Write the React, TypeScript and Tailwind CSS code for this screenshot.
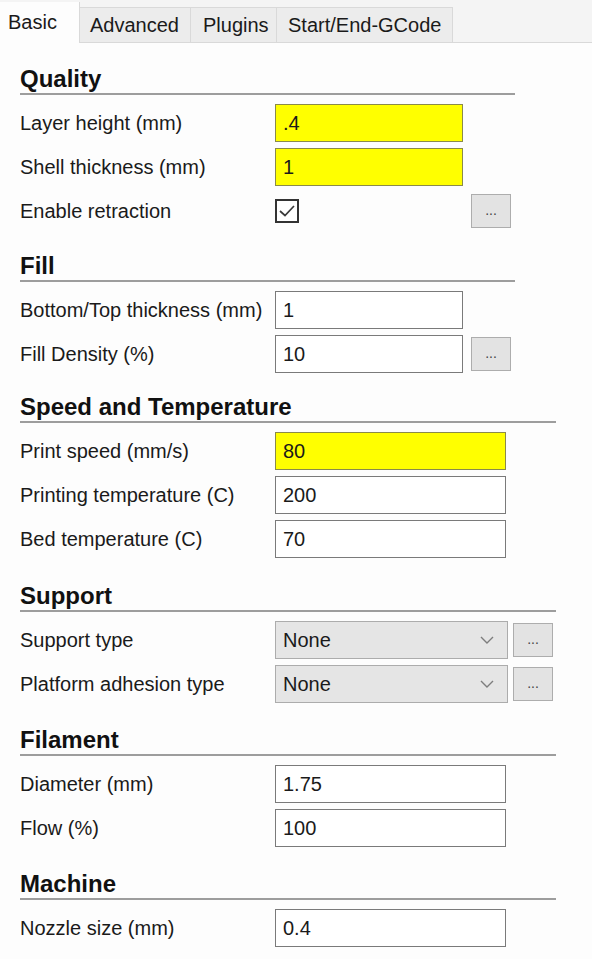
import React from "react";

function TextBox({ value, yellow, w }: { value: string; yellow?: boolean; w: string }) {
  return (
    <div
      className={`${w} h-[38px] border border-[#7a7a7a] flex items-center pl-[7px] text-[20px] text-[#1a1a1a] ${
        yellow ? "bg-[#ffff00] border-[#8a8a4a]" : "bg-white"
      }`}
    >
      {value}
    </div>
  );
}

function DotsButton({ big }: { big?: boolean }) {
  return (
    <div
      className={`${big ? "ml-[8px]" : "ml-[5px]"} w-[40px] h-[34px] bg-[#e3e3e3] border border-[#adadad] flex items-center justify-center text-[14px] text-[#444] leading-none pb-[2px]`}
    >
      ...
    </div>
  );
}

function Select({ value }: { value: string }) {
  return (
    <div className="w-[233px] h-[38px] bg-[#e5e5e5] border border-[#acacac] flex items-center justify-between pl-[7px] pr-[12px] text-[20px] text-[#1a1a1a]">
      <span>{value}</span>
      <svg width="16" height="10" viewBox="0 0 16 10">
        <polyline points="2,2 8,8 14,2" fill="none" stroke="#7d7d7d" strokeWidth="1.4" />
      </svg>
    </div>
  );
}

function Checkbox() {
  return (
    <div className="w-[24px] h-[24px] border-2 border-[#333] bg-white flex items-center justify-center">
      <svg width="18" height="14" viewBox="0 0 18 14">
        <polyline points="2,7 7,11.5 16,2" fill="none" stroke="#3a3a3a" strokeWidth="1.7" />
      </svg>
    </div>
  );
}

function Row({ label, children }: { label: string; children: React.ReactNode }) {
  return (
    <div className="flex items-center h-[38px]">
      <div className="w-[255px] text-[20px] text-[#1a1a1a] whitespace-nowrap">{label}</div>
      {children}
    </div>
  );
}

function Section({
  title,
  wide,
  mt,
  children,
}: {
  title: string;
  wide?: boolean;
  mt: string;
  children: React.ReactNode;
}) {
  return (
    <section className={`${wide ? "w-[536px]" : "w-[495px]"} ${mt}`}>
      <div className="h-[30px] border-b-2 border-[#9d9d9d] text-[24px] font-bold leading-[28px] text-[#111]">
        {title}
      </div>
      <div className="flex flex-col gap-[6px] mt-[9px]">{children}</div>
    </section>
  );
}

export default function App() {
  return (
    <div className="w-[592px] h-[959px] bg-[#fdfdfd] font-['Liberation_Sans',Arial,sans-serif] overflow-hidden">
      {/* Tabs */}
      <div className="h-[43px] bg-[#f4f4f4] border-b border-[#d9d9d9] flex items-end">
        <div className="w-[80px] h-[41px] -mb-px bg-[#fdfdfd] border-r border-[#d9d9d9] flex items-center pl-[8px] pb-[2px] text-[20px] text-[#1a1a1a]">
          Basic
        </div>
        <div className="w-[111px] h-[35px] bg-[#ececec] border-t border-r border-[#d9d9d9] flex items-center pl-[10px] text-[20px] text-[#1a1a1a]">
          Advanced
        </div>
        <div className="w-[86px] h-[35px] bg-[#ececec] border-t border-r border-[#d9d9d9] flex items-center pl-[12px] text-[20px] text-[#1a1a1a]">
          Plugins
        </div>
        <div className="w-[176px] h-[35px] bg-[#ececec] border-t border-r border-[#d9d9d9] flex items-center pl-[11px] text-[20px] text-[#1a1a1a]">
          Start/End-GCode
        </div>
      </div>

      <div className="pl-[20px]">
        <Section title="Quality" mt="mt-[22px]">
          <Row label="Layer height (mm)">
            <TextBox value=".4" yellow w="w-[188px]" />
          </Row>
          <Row label="Shell thickness (mm)">
            <TextBox value="1" yellow w="w-[188px]" />
          </Row>
          <Row label="Enable retraction">
            <div className="w-[188px] flex items-center">
              <Checkbox />
            </div>
            <DotsButton big />
          </Row>
        </Section>

        <Section title="Fill" mt="mt-[22px]">
          <Row label="Bottom/Top thickness (mm)">
            <TextBox value="1" w="w-[188px]" />
          </Row>
          <Row label="Fill Density (%)">
            <TextBox value="10" w="w-[188px]" />
            <DotsButton big />
          </Row>
        </Section>

        <Section title="Speed and Temperature" wide mt="mt-[20px]">
          <Row label="Print speed (mm/s)">
            <TextBox value="80" yellow w="w-[231px]" />
          </Row>
          <Row label="Printing temperature (C)">
            <TextBox value="200" w="w-[231px]" />
          </Row>
          <Row label="Bed temperature (C)">
            <TextBox value="70" w="w-[231px]" />
          </Row>
        </Section>

        <Section title="Support" wide mt="mt-[24px]">
          <Row label="Support type">
            <Select value="None" />
            <DotsButton />
          </Row>
          <Row label="Platform adhesion type">
            <Select value="None" />
            <DotsButton />
          </Row>
        </Section>

        <Section title="Filament" wide mt="mt-[23px]">
          <Row label="Diameter (mm)">
            <TextBox value="1.75" w="w-[231px]" />
          </Row>
          <Row label="Flow (%)">
            <TextBox value="100" w="w-[231px]" />
          </Row>
        </Section>

        <Section title="Machine" wide mt="mt-[23px]">
          <Row label="Nozzle size (mm)">
            <TextBox value="0.4" w="w-[231px]" />
          </Row>
        </Section>
      </div>
    </div>
  );
}
